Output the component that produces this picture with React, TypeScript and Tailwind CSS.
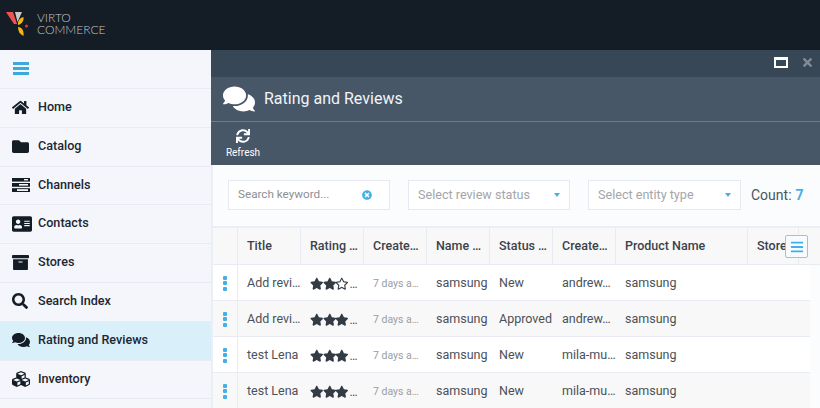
import { FaHome, FaFolder, FaAddressCard, FaArchive, FaSearch, FaComments, FaCubes, FaSync, FaBars, FaTimes, FaTimesCircle, FaStar, FaRegStar } from 'react-icons/fa';
import type { ReactNode } from 'react';

function ChannelsIcon() {
    return (
        <svg width="18" height="14" viewBox="0 0 18 14" className="text-[#141c25]">
            <rect x="0" y="0" width="18" height="3.6" fill="currentColor" />
            <rect x="12" y="1" width="4" height="1.4" fill="#f4f6fb" />
            <rect x="0" y="5" width="18" height="3.8" fill="currentColor" />
            <rect x="7" y="6" width="9" height="1.6" fill="#f4f6fb" />
            <rect x="0" y="10.2" width="18" height="3.8" fill="currentColor" />
            <rect x="5" y="11.2" width="11" height="1.8" fill="#f4f6fb" />
        </svg>
    );
}

const navItems: { label: string; icon: ReactNode; active?: boolean }[] = [
    { label: 'Home', icon: <FaHome className="text-[17px]" /> },
    { label: 'Catalog', icon: <FaFolder className="text-[17px]" /> },
    { label: 'Channels', icon: <ChannelsIcon /> },
    { label: 'Contacts', icon: <FaAddressCard className="text-[20px]" /> },
    { label: 'Stores', icon: <FaArchive className="text-[17px]" /> },
    { label: 'Search Index', icon: <FaSearch className="text-[16px]" /> },
    { label: 'Rating and Reviews', icon: <FaComments className="text-[18px]" />, active: true },
    { label: 'Inventory', icon: <FaCubes className="text-[18px]" /> },
];

const columns = ['Title', 'Rating …', 'Create…', 'Name …', 'Status …', 'Create…', 'Product Name', 'Store'];
const colWidths = ['w-[63px]', 'w-[63px]', 'w-[63px]', 'w-[63px]', 'w-[63px]', 'w-[63px]', 'w-[132px]', 'w-[51px]'];

const rows = [
    { title: 'Add revi…', stars: 2, status: 'New', by: 'andrew…' },
    { title: 'Add revi…', stars: 3, status: 'Approved', by: 'andrew…' },
    { title: 'test Lena', stars: 3, status: 'New', by: 'mila-mu…' },
    { title: 'test Lena', stars: 3, status: 'New', by: 'mila-mu…' },
];

function Stars({ count }: { count: number }) {
    return (
        <div className="flex items-center text-[#333b45]">
            {[0, 1, 2].map((i) =>
                i < count ? (
                    <FaStar key={i} className="h-[13.5px] w-[13.5px] -mr-[1px]" />
                ) : (
                    <FaRegStar key={i} className="h-[13.5px] w-[13.5px] -mr-[1px]" />
                )
            )}
            <span className="ml-[2px] text-[12px] leading-none text-[#4b5157]">…</span>
        </div>
    );
}

function Caret() {
    return <span className="h-0 w-0 border-x-[3px] border-t-[4px] border-x-transparent border-t-[#43b0e6]" />;
}

function Dots() {
    return (
        <div className="flex flex-col gap-[1.5px]">
            <span className="h-1 w-1 bg-[#43b0e6] rounded-[1px]" />
            <span className="h-1 w-1 bg-[#43b0e6] rounded-[1px]" />
            <span className="h-1 w-1 bg-[#43b0e6] rounded-[1px]" />
        </div>
    );
}

export default function App() {
    return (
        <div className="h-[408px] w-[820px] overflow-hidden flex flex-col font-['Roboto',sans-serif] bg-white">
            {/* Top bar with logo */}
            <div className="h-[50px] shrink-0 bg-[#141c25] flex items-center pl-[6px] gap-[9px] pb-[3px]">
                <svg width="22" height="24" viewBox="0 0 22 24">
                    <path d="M0 0 L7 0 L11 12 L8 12 Z" fill="#ef5350" />
                    <path d="M9 0 L16 0 L11.5 10 Z" fill="#c9c9c9" />
                    <path d="M17.5 5 C18 8 16.5 12 12 13 C11.5 9 13.5 6 17.5 5 Z" fill="#f5b316" />
                    <path d="M12 15 C16 15 18 18.5 17.5 24 C14 22.5 12 19.5 12 15 Z" fill="#f5b316" />
                    <circle cx="20.5" cy="14" r="1.5" fill="#e53935" />
                </svg>
                <div className="font-['Lato',sans-serif] font-light text-[12px] leading-[12px] text-[#c3c5c8]">
                    <div>VIRTO</div>
                    <div>COMMERCE</div>
                </div>
            </div>

            <div className="flex flex-1 min-h-0">
                {/* Sidebar */}
                <div className="w-[211px] shrink-0 bg-[#f4f6fb] flex flex-col">
                    <div className="h-[39px] shrink-0 flex items-center pl-[13px] pb-[2px] border-b border-[#e8ebf2]">
                        <div className="flex flex-col gap-[2px]">
                            <span className="h-[3px] w-4 bg-[#3aa9e0]" />
                            <span className="h-[3px] w-4 bg-[#3aa9e0]" />
                            <span className="h-[3px] w-4 bg-[#3aa9e0]" />
                        </div>
                    </div>
                    {navItems.map((item) => (
                        <div
                            key={item.label}
                            className={`h-[38.8px] shrink-0 flex items-center pb-[1px] border-b border-[#e8ebf2] text-[12.6px] font-medium text-[#1c2733] ${item.active ? 'bg-[#d9f0fb]' : ''}`}
                        >
                            <div className="w-[38px] pl-[12px] flex items-center text-[#141c25]">{item.icon}</div>
                            {item.label}
                        </div>
                    ))}
                </div>

                {/* Blade */}
                <div className="flex-1 min-w-0 flex flex-col bg-[#fbfcfe]">
                    <div className="h-[27px] shrink-0 bg-[#384755] flex items-center justify-end gap-[13px] pr-[6px] pb-[2px]">
                        <div className="w-[14px] h-[11px] border-2 border-t-[3px] border-white" />
                        <FaTimes className="text-[13px] text-[#7f8b96]" />
                    </div>
                    <div className="h-[45px] shrink-0 bg-[#475768] flex items-center pl-[12px] gap-[9px] border-b border-[#6e7b89]">
                        <FaComments className="text-[32px] text-white" />
                        <span className="text-[16px] text-[#f2f4f6]">Rating and Reviews</span>
                    </div>
                    <div className="h-[43px] shrink-0 bg-[#475768] flex items-start">
                        <div className="w-[64px] flex flex-col items-center pt-[7px] text-white">
                            <FaSync className="text-[14px]" />
                            <span className="text-[10px] leading-[11px] mt-[4px]">Refresh</span>
                        </div>
                    </div>

                    <div className="flex-1 min-h-0 flex flex-col border-l-2 border-[#eceef6]">
                        {/* Filters */}
                        <div className="h-[63px] shrink-0 flex items-start pl-[15px] pt-[15px] border-b-[2px] border-[#eceef6]">
                            <div className="w-[162px] h-[30px] bg-white border border-[#e6e9f1] flex items-center justify-between pl-[9px] pr-[17px] text-[11.7px] text-[#8c9096]">
                                <span>Search keyword...</span>
                                <FaTimesCircle className="text-[10px] text-[#43b0e6]" />
                            </div>
                            <div className="ml-[18px] w-[162px] h-[30px] bg-white border border-[#e6e9f1] flex items-center justify-between pl-[9px] pr-[9px] text-[12.6px] text-[#a3a6ab]">
                                <span>Select review status</span>
                                <Caret />
                            </div>
                            <div className="ml-[18px] w-[153px] h-[30px] bg-white border border-[#e6e9f1] flex items-center justify-between pl-[9px] pr-[9px] text-[12.6px] text-[#a3a6ab]">
                                <span>Select entity type</span>
                                <Caret />
                            </div>
                            <div className="ml-[10px] h-[30px] flex items-center gap-[4px] text-[14px] text-[#4b5560] whitespace-nowrap">
                                <span>Count:</span>
                                <span className="font-bold text-[#43b0e6]">7</span>
                            </div>
                        </div>

                        {/* Table */}
                        <div className="relative flex-1 min-h-0 overflow-hidden">
                            <div className="h-[37px] flex bg-[#f8f8f9] border-b border-[#e8ebf2] text-[12.5px] font-medium text-[#3c4249]">
                                <div className="w-[25px] border-r border-[#e8ebf2]" />
                                {columns.map((col, i) => (
                                    <div key={i} className={`${colWidths[i]} shrink-0 flex items-center pl-[9px] border-r border-[#e8ebf2] overflow-hidden whitespace-nowrap`}>
                                        {col}
                                    </div>
                                ))}
                            </div>
                            {rows.map((row, i) => (
                                <div key={i} className={`w-[597px] h-[36px] flex border-b border-[#e8ebf2] text-[12.5px] text-[#4b5157] ${i % 2 === 1 ? 'bg-[#f8f8f9]' : 'bg-white'}`}>
                                    <div className="w-[25px] h-full flex items-center justify-center pt-[1px] border-r border-[#e8ebf2]">
                                        <Dots />
                                    </div>
                                    <div className="flex-1 flex items-center pt-[2px]">
                                        <div className="w-[63px] pl-[9px] whitespace-nowrap">{row.title}</div>
                                        <div className="w-[63px] pl-[9px]"><Stars count={row.stars} /></div>
                                        <div className="w-[63px] pl-[9px] text-[10.5px] text-[#9a9da1] whitespace-nowrap">7 days a…</div>
                                        <div className="w-[63px] pl-[9px]">samsung</div>
                                        <div className="w-[63px] pl-[9px]">{row.status}</div>
                                        <div className="w-[63px] pl-[9px] whitespace-nowrap">{row.by}</div>
                                        <div className="w-[131px] pl-[9px]">samsung</div>
                                    </div>
                                </div>
                            ))}
                            <div className="absolute right-[12px] top-[7px] w-[23px] h-[23px] bg-[#f8fbfd] border border-[#9cc4d8] rounded-[2px] flex items-center justify-center">
                                <FaBars className="text-[14px] text-[#43b0e6]" />
                            </div>
                        </div>
                    </div>
                </div>
            </div>
        </div>
    );
}
